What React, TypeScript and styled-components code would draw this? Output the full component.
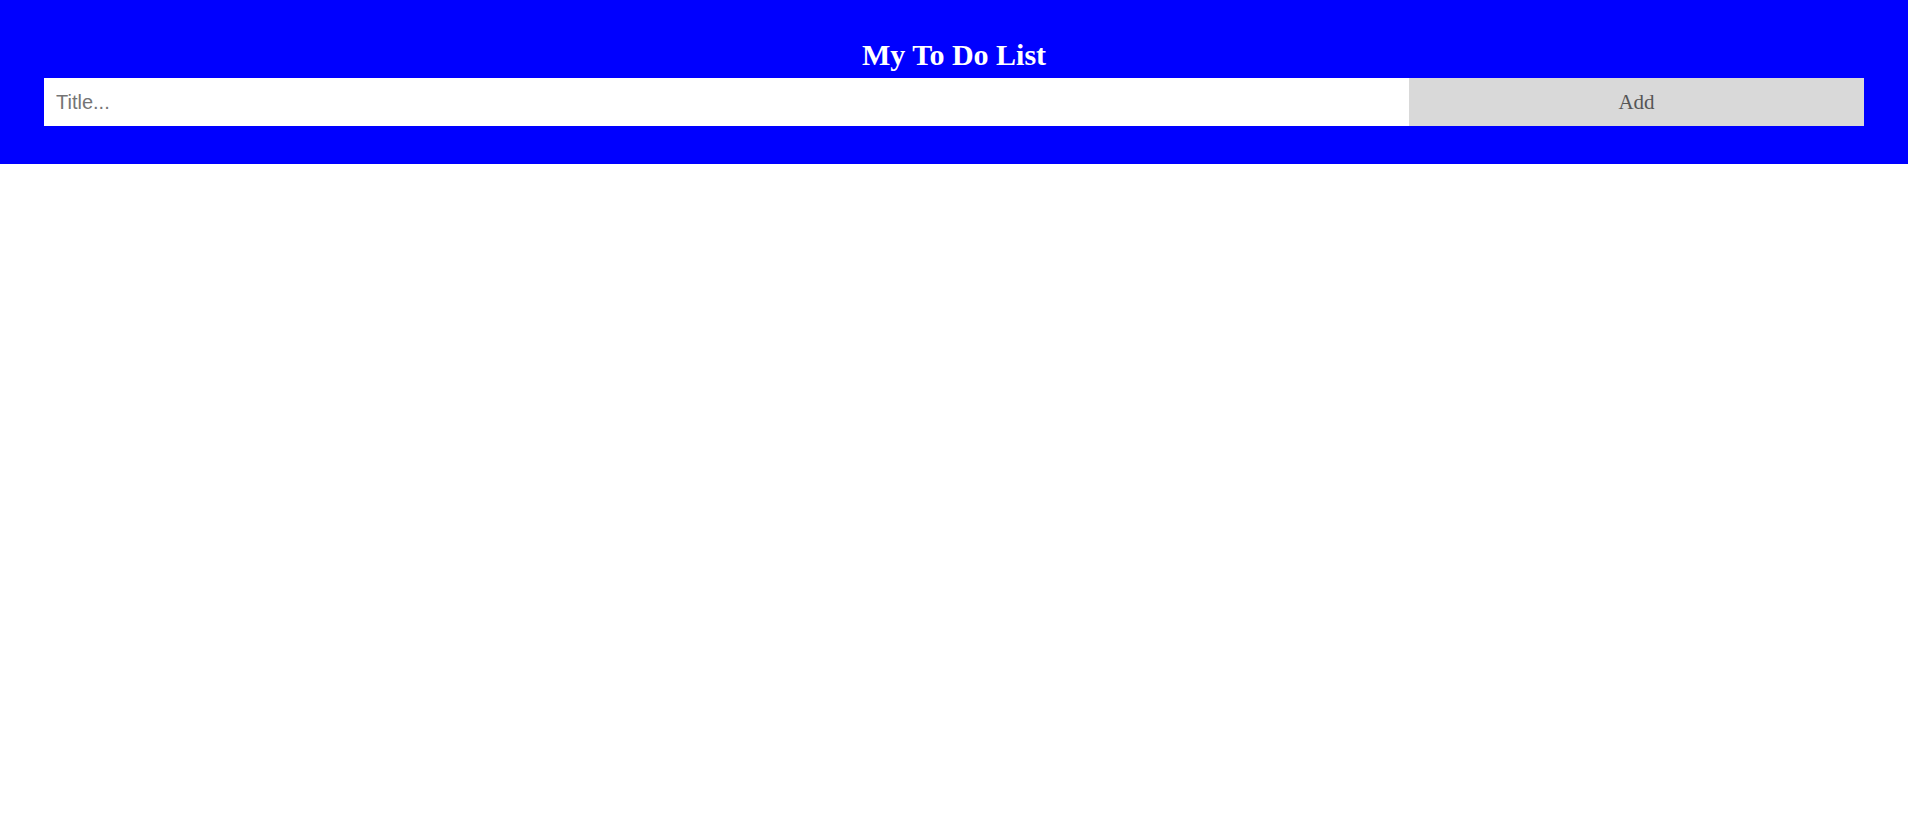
import styled, { createGlobalStyle } from "styled-components";

const GlobalStyle = createGlobalStyle`
  html, body {
    margin: 0;
    padding: 0;
    background: #ffffff;
  }
  * {
    box-sizing: border-box;
  }
`;

const Header = styled.div`
  background-color: #0000ff;
  color: white;
  padding: 38px 44px;
  text-align: center;
`;

const Title = styled.h2`
  margin: 0 0 7px 0;
  font-family: "Liberation Serif", "Times New Roman", serif;
  font-size: 30px;
  font-weight: bold;
  line-height: 33px;
`;

const Form = styled.div`
  display: flex;
  height: 48px;
`;

const TitleInput = styled.input`
  width: 75%;
  height: 100%;
  border: none;
  outline: none;
  margin: 0;
  padding: 0 12px;
  font-family: "Liberation Sans", Arial, sans-serif;
  font-size: 20px;
  color: #000;
  background: #fff;
  border-radius: 0;

  &::placeholder {
    color: #757575;
  }
`;

const AddButton = styled.span`
  width: 25%;
  display: flex;
  align-items: center;
  justify-content: center;
  background: #d9d9d9;
  color: #555;
  font-family: "Liberation Serif", "Times New Roman", serif;
  font-size: 21px;
  cursor: pointer;
`;

export default function App() {
  return (
    <>
      <GlobalStyle />
      <Header>
        <Title>My To Do List</Title>
        <Form>
          <TitleInput type="text" placeholder="Title..." />
          <AddButton>Add</AddButton>
        </Form>
      </Header>
    </>
  );
}
